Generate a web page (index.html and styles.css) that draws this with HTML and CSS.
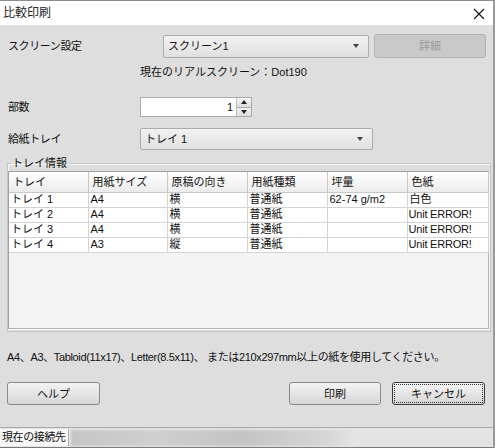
FILE: index.html
```html
<!DOCTYPE html>
<html lang="ja">
<head>
<meta charset="utf-8">
<title>比較印刷</title>
<link rel="stylesheet" href="styles.css">
</head>
<body>
<div class="window">
  <div class="titlebar">
    <span class="title">比較印刷</span>
    <svg class="close" width="12" height="12" viewBox="0 0 12 12"><path d="M1 1 L11 11 M11 1 L1 11" stroke="#111" stroke-width="1.1" fill="none"/></svg>
  </div>
  <div class="content">
    <div class="row row-screen">
      <span class="label">スクリーン設定</span>
      <div class="combo combo-screen"><span>スクリーン1</span><i class="arrow"></i></div>
      <div class="btn btn-disabled">詳細</div>
    </div>
    <div class="info">現在のリアルスクリーン：Dot190</div>
    <div class="row row-copies">
      <span class="label">部数</span>
      <div class="spin">
        <div class="spin-field">1</div>
        <div class="spin-btns">
          <div class="spin-up"><i class="tri-up"></i></div>
          <div class="spin-down"><i class="tri-down"></i></div>
        </div>
      </div>
    </div>
    <div class="row row-tray">
      <span class="label">給紙トレイ</span>
      <div class="combo combo-tray"><span>トレイ 1</span><i class="arrow"></i></div>
    </div>
    <fieldset class="group">
      <legend>トレイ情報</legend>
      <div class="tableframe">
        <table class="grid">
          <colgroup>
            <col class="c1"><col class="c2"><col class="c3"><col class="c4"><col class="c5"><col class="c6">
          </colgroup>
          <thead>
            <tr><th>トレイ</th><th>用紙サイズ</th><th>原稿の向き</th><th>用紙種類</th><th>坪量</th><th>色紙</th></tr>
          </thead>
          <tbody>
            <tr><td>トレイ 1</td><td>A4</td><td>横</td><td>普通紙</td><td>62-74 g/m2</td><td>白色</td></tr>
            <tr><td>トレイ 2</td><td>A4</td><td>横</td><td>普通紙</td><td></td><td class="err">Unit ERROR!</td></tr>
            <tr><td>トレイ 3</td><td>A4</td><td>横</td><td>普通紙</td><td></td><td class="err">Unit ERROR!</td></tr>
            <tr><td>トレイ 4</td><td>A3</td><td>縦</td><td>普通紙</td><td></td><td class="err">Unit ERROR!</td></tr>
          </tbody>
        </table>
      </div>
    </fieldset>
    <div class="notice">A4、A3、Tabloid(11x17)、Letter(8.5x11)、 または210x297mm以上の紙を使用してください。</div>
    <div class="buttons">
      <div class="btn btn-help">ヘルプ</div>
      <div class="spacer"></div>
      <div class="btn btn-print">印刷</div>
      <div class="btn btn-cancel"><span class="focus">キャンセル</span></div>
    </div>
  </div>
  <div class="statusbar">
    <div class="status-label">現在の接続先</div>
    <div class="status-value"></div>
  </div>
</div>
</body>
</html>
```
FILE: styles.css
```css
* { box-sizing: border-box; }
html, body { margin: 0; padding: 0; }
body {
  width: 495px;
  height: 448px;
  overflow: hidden;
  background: #dedede;
  font-family: "Liberation Sans", "Noto Sans CJK JP", sans-serif;
  font-size: 11px;
  color: #111;
}
.window {
  width: 495px;
  height: 448px;
  border-top: 1px solid #8c8c8c;
  border-right: 2px solid #9a9a9a;
  display: flex;
  flex-direction: column;
  background: #dedede;
}
.titlebar {
  height: 24px;
  background: #ffffff;
  display: flex;
  align-items: center;
  justify-content: space-between;
  padding: 0 8px 0 3px;
  flex: none;
}
.title { font-size: 12px; line-height: 14px; color: #222; }
.close { display: block; margin-top: 1px; }
.content {
  flex: 1;
  padding: 0 0 0 7px;
  display: flex;
  flex-direction: column;
}
.row { display: flex; align-items: center; }
.label { width: 133px; padding-left: 1px; line-height: 14px; letter-spacing: -0.4px; }
.row-screen { margin-top: 9px; height: 24px; }
.row-screen .label { width: 156px; }
.combo {
  position: relative;
  height: 23px;
  border: 1px solid #acacac;
  border-radius: 2px;
  background: linear-gradient(#f2f2f2, #e0e0e0);
  display: flex;
  align-items: center;
  padding-left: 4px;
  line-height: 14px;
}
.combo-screen { width: 206px; }
.combo-tray { width: 233px; height: 22px; }
.arrow {
  position: absolute;
  right: 9px;
  top: 50%;
  margin-top: -2px;
  width: 0; height: 0;
  border-left: 3.5px solid transparent;
  border-right: 3.5px solid transparent;
  border-top: 4px solid #444;
}
.btn {
  height: 23px;
  border: 1px solid #8a8a8a;
  border-radius: 3px;
  background: linear-gradient(#f4f4f4, #d6d6d6);
  display: flex;
  align-items: center;
  justify-content: center;
  line-height: 14px;
}
.btn-disabled {
  margin-left: 5px;
  width: 112px;
  height: 24px;
  background: #c9c9c9;
  border-color: #b2b2b2;
  color: #9b9b9b;
}
.info { margin: 7px 0 0 133px; height: 14px; line-height: 14px; }
.row-copies { margin-top: 18px; height: 20px; }
.spin { display: flex; width: 112px; height: 20px; border: 1px solid #acacac; background: #fff; }
.spin-field { flex: 1; text-align: right; padding-right: 3px; line-height: 18px; }
.spin-btns { width: 15px; display: flex; flex-direction: column; border-left: 1px solid #bdbdbd; }
.spin-up, .spin-down {
  flex: 1;
  background: linear-gradient(#f3f3f3, #dedede);
  display: flex; align-items: center; justify-content: center;
}
.spin-up { border-bottom: 1px solid #a8a8a8; }
.tri-up { width: 0; height: 0; border-left: 3px solid transparent; border-right: 3px solid transparent; border-bottom: 4px solid #222; }
.tri-down { width: 0; height: 0; border-left: 3px solid transparent; border-right: 3px solid transparent; border-top: 4px solid #222; }
.row-tray { margin-top: 11px; height: 22px; }
.group {
  margin: 6px 0 0 0;
  padding: 1px 1px 2px 0;
  width: 484px;
  border: 1px solid #c2c2c2;
  box-shadow: inset 1px 1px 0 #f6f6f6;
  min-width: 0;
}
.group legend {
  padding: 0 2px 0 1px;
  margin-left: 3px;
  line-height: 14px;
  font-size: 11px;
}
.tableframe {
  height: 158px;
  width: 481px;
  margin-left: 0;
  border: 1px solid #a0a0a0;
  border-right-color: #b4b4b4;
  border-bottom-color: #b4b4b4;
  background: #f4f4f4;
  box-shadow: 1px 1px 0 #f8f8f8;
}
.grid {
  border-collapse: collapse;
  table-layout: fixed;
  width: 479px;
}
.c1 { width: 79px; } .c2 { width: 79px; } .c3 { width: 80px; }
.c4 { width: 80px; } .c5 { width: 80px; } .c6 { width: 81px; }
.grid th {
  height: 20px;
  font-weight: normal;
  text-align: left;
  padding: 0 0 0 4px;
  background: linear-gradient(#ffffff, #ebebeb);
  border-right: 1px solid #c8c8c8;
  border-bottom: 1px solid #c8c8c8;
  line-height: 14px;
  white-space: nowrap;
}
.grid td {
  height: 15px;
  padding: 0 0 0 2px;
  background: #fff;
  border-right: 1px solid #d4d4d4;
  border-bottom: 1px solid #d4d4d4;
  line-height: 13px;
  white-space: nowrap;
  overflow: hidden;
}
.grid td.err { padding-left: 1px; letter-spacing: -0.2px; }
.notice { margin-top: 18px; height: 14px; line-height: 14px; letter-spacing: -0.35px; white-space: nowrap; }
.buttons { display: flex; margin-top: 18px; height: 23px; padding-right: 8px; }
.btn-help { width: 93px; }
.spacer { flex: 1; }
.btn-print { width: 92px; }
.btn-cancel { width: 93px; margin-left: 11px; border-color: #3c3c3c; padding: 2px; }
.btn-cancel .focus {
  width: 100%; height: 100%;
  display: flex; align-items: center; justify-content: center;
  outline: 1px dotted #333;
}
.statusbar {
  margin-top: 0;
  height: 21px;
  flex: none;
  border-top: 1px solid #a8a8a8;
  border-bottom: 1px solid #777;
  background: #e4e4e4;
  display: flex;
  align-items: center;
  padding: 1px 0 1px 0;
}
.status-label {
  height: 17px;
  width: 69px;
  background: #f8f8f8;
  border-right: 1px solid #b0b0b0;
  padding-left: 2px;
  line-height: 17px;
  letter-spacing: -0.4px;
}
.status-value {
  margin-left: 2px;
  height: 16px;
  width: 284px;
  background: linear-gradient(90deg, #c6c6c6, #cfcfcf 30%, #c4c4c4 60%, #d6d6d6 90%, #e4e4e4);
  filter: blur(1px);
}
```
